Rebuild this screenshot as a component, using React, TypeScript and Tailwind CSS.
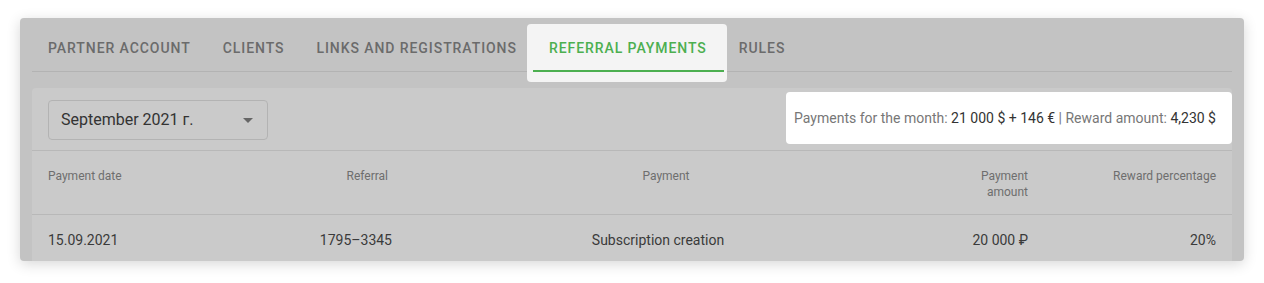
import React from "react";

const tabs = ["PARTNER ACCOUNT", "CLIENTS", "LINKS AND REGISTRATIONS", "REFERRAL PAYMENTS", "RULES"];

export default function App() {
  return (
    <div className="w-[1264px] h-[283px] bg-white pt-[18px] pl-[20px]" style={{ fontFamily: "Roboto, 'Liberation Sans', sans-serif" }}>
      <div className="w-[1224px] h-[243px] bg-[#c3c3c3] rounded-[4px] shadow-[0_3px_14px_rgba(0,0,0,0.16)] overflow-hidden px-[12px] pt-[6px]">
        <div className="flex h-[48px] border-b border-[#b3b3b3]">
          {tabs.map((t, i) => {
            const active = i === 3;
            return (
              <div key={t} className="relative flex items-center px-[16px] h-[48px] pt-[1px]">
                {active && (
                  <div className="absolute left-[-6px] right-[-4px] top-0 h-[58px] bg-[#f4f4f4] rounded-[4px]" />
                )}
                <span className={`relative text-[14px] font-medium tracking-[0.93px] ${active ? "text-[#4caf50]" : "text-[#6b6b6b]"}`}>{t}</span>
                {active && <div className="absolute left-0 right-[-1px] bottom-0 h-[2px] bg-[#4caf50]" />}
              </div>
            );
          })}
        </div>
        <div className="mt-[16px] bg-[#cacaca] rounded-t-[4px] h-[200px]">
          <div className="relative flex items-start px-[16px] pt-[12px] h-[63px] border-b border-[#b8b8b8]">
            <div className="w-[220px] h-[40px] border border-[#b3b3b3] rounded-[4px] flex items-center justify-between pl-[12px] pr-[14px]">
              <span className="text-[16px] text-[#333333]">September 2021 г.</span>
              <svg width="10" height="5" viewBox="0 0 10 5"><path d="M0 0 L10 0 L5 5 Z" fill="#666666" /></svg>
            </div>
            <div className="absolute right-0 top-[4px] w-[446px] h-[52px] bg-white rounded-[4px] flex items-center justify-end pr-[16px] text-[14px] text-[#777777] whitespace-nowrap">
              <span>
                Payments for the month: <span className="text-[#333333]">21 000 $ + 146 €</span> | Reward amount: <span className="text-[#333333]">4,230 $</span>
              </span>
            </div>
          </div>
          <div className="flex px-[16px] pt-[17px] h-[64px] border-b border-[#b8b8b8] text-[12px] leading-[16px] text-[#6e6e6e]">
            <div className="w-[200px]">Payment date</div>
            <div className="w-[140px] text-right">Referral</div>
            <div className="w-[536px] text-center pl-[20px]">Payment</div>
            <div className="w-[104px] flex justify-end"><span className="text-right w-[56px]">Payment amount</span></div>
            <div className="w-[188px] text-right">Reward percentage</div>
          </div>
          <div className="flex px-[16px] pt-[15px] text-[14px] leading-[20px] text-[#3a3a3a]">
            <div className="w-[200px]">15.09.2021</div>
            <div className="w-[144px] text-right">1795–3345</div>
            <div className="w-[532px] text-center">Subscription creation</div>
            <div className="w-[104px] text-right">20 000 ₽</div>
            <div className="w-[188px] text-right">20%</div>
          </div>
        </div>
      </div>
    </div>
  );
}
